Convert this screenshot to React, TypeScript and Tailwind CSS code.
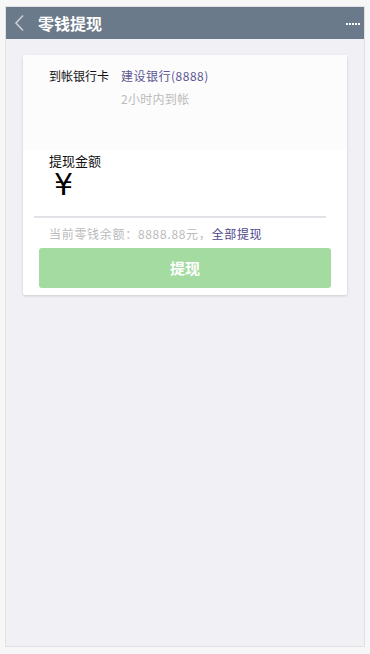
import React from "react";

export default function App() {
  return (
    <div
      className="w-[370px] h-[654px] bg-[#f7f7f7] pt-[6px] px-[5px] pb-[7px]"
      style={{ fontFamily: '"Noto Sans CJK SC", "Noto Sans", sans-serif' }}
    >
      <div className="h-full flex flex-col bg-[#f0f0f5] border border-[#e2e2e6]">
        {/* Header */}
        <div className="h-[32px] bg-[#6b7a8a] flex items-center px-[5px] shrink-0">
          <svg width="14" height="18" viewBox="0 0 14 18" className="ml-[1px]">
            <path d="M11 1.5 L4 9 L11 16.5" fill="none" stroke="#c9ced6" strokeWidth="1.6" />
          </svg>
          <h1 className="ml-[12px] text-white text-[16px] font-bold leading-none">零钱提现</h1>
          <span className="ml-auto mr-[-1px] mt-[2px] flex gap-[1px]">
            {[0, 1, 2, 3, 4].map((i) => (
              <span key={i} className="w-[2px] h-[2px] bg-white" />
            ))}
          </span>
        </div>

        {/* Card */}
        <div className="mx-[17px] mt-[16px] bg-white shadow-[0_1px_3px_rgba(0,0,0,0.15)] rounded-[2px]">
          <div className="bg-[#fcfcfd] h-[95px] flex pl-[26px] pt-[12px] text-[12px] leading-[18px]">
            <span className="text-[#111] w-[72px]">到帐银行卡</span>
            <div className="flex flex-col">
              <span className="text-[#5b5592] tracking-[0.5px]">建设银行(8888)</span>
              <span className="text-[#bbbbbb] mt-[5px] tracking-[0.3px]">2小时内到帐</span>
            </div>
          </div>
          <div className="pl-[26px] pt-[2px]">
            <div className="text-[13px] text-[#111] leading-[18px]">提现金额</div>
            <div className="text-[30px] leading-[30px] text-black ml-[5px]" style={{ fontFamily: '"DejaVu Sans", sans-serif' }}>¥</div>
          </div>
          <div className="ml-[11px] mr-[21px] mt-[16px] h-[2px] bg-[#e2e2e6]" />
          <div className="pl-[26px] mt-[8px] text-[12px] leading-[16px] text-[#bbbbbb] tracking-[0.7px]">
            当前零钱余额：8888.88元，<span className="text-[#4d4788]">全部提现</span>
          </div>
          <div className="px-[16px] pt-[6px] pb-[7px]">
            <button className="w-full h-[40px] rounded-[3px] bg-[#a3dba0] text-white text-[15px] font-bold">
              提现
            </button>
          </div>
        </div>
      </div>
    </div>
  );
}
